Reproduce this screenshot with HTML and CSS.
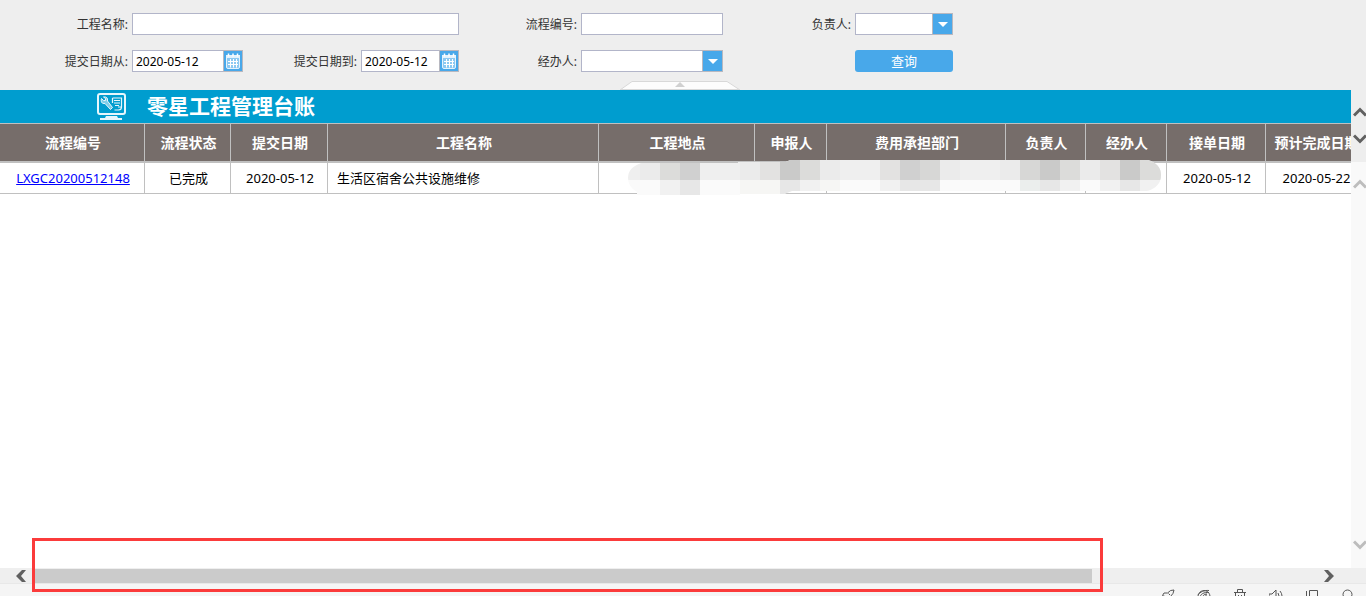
FILE: index.html
```html
<!DOCTYPE html>
<html lang="zh-CN">
<head>
<meta charset="utf-8">
<title>零星工程管理台账</title>
<link rel="stylesheet" href="styles.css">
</head>
<body>
<svg class="defs" aria-hidden="true">
  <symbol id="calendar" viewBox="0 0 18 20">
    <path d="M2.500 4.500h13v11.500q0 1.500-1.500 1.500h-10q-1.500 0-1.500-1.500z" fill="#8cc9f2" stroke="#e4f3fd" stroke-width="1"/>
    <path d="M2 4h14v3h-14z" fill="#e4f3fd"/>
    <path d="M4.500 2.500v3M9 2.500v3M13.500 2.500v3" stroke="#fff" stroke-width="1.500"/>
    <path d="M4 10.500h10M4 13.500h10M6.500 8v8.500M9.500 8v8.500M12.500 8v8.500" stroke="#fff" stroke-width="1" fill="none"/>
  </symbol>
  <symbol id="up" viewBox="0 0 14 10"><path d="M1 8.500l6-6 6 6" fill="none" stroke="currentColor" stroke-width="3"/></symbol>
  <symbol id="down" viewBox="0 0 14 10"><path d="M1 1.500l6 6 6-6" fill="none" stroke="currentColor" stroke-width="3"/></symbol>
</svg>
<form class="filters">
  <label class="label" for="name">工程名称:</label>
  <input class="box wide" id="name" type="text">
  <label class="label" for="code">流程编号:</label>
  <input class="box" id="code" type="text">
  <label class="label" for="owner">负责人:</label>
  <div class="combo">
    <select class="box" id="owner"><option></option></select>
    <span class="drop"><svg width="10" height="5" viewBox="0 0 10 5"><path d="M0 0h10l-5 5z" fill="#fff"/></svg></span>
  </div>
  <label class="label" for="from">提交日期从:</label>
  <div class="date">
    <input class="box" id="from" type="text" value="2020-05-12">
    <button class="pick" type="button" aria-label="选择日期"><svg width="18" height="20"><use href="#calendar"/></svg></button>
  </div>
  <label class="label" for="to">提交日期到:</label>
  <div class="date">
    <input class="box" id="to" type="text" value="2020-05-12">
    <button class="pick" type="button" aria-label="选择日期"><svg width="18" height="20"><use href="#calendar"/></svg></button>
  </div>
  <label class="label" for="agent">经办人:</label>
  <div class="combo">
    <select class="box" id="agent"><option></option></select>
    <span class="drop"><svg width="10" height="5" viewBox="0 0 10 5"><path d="M0 0h10l-5 5z" fill="#fff"/></svg></span>
  </div>
  <button class="query" type="button">查询</button>
  <button class="collapse" type="button" aria-label="收起">
    <svg width="120" height="9" viewBox="0 0 120 9"><path d="M0 9l12-8.500h95l13 8.500z" fill="#fcfcfc" stroke="#d8d8d8"/><path d="M0 8.500h120" stroke="#d8d8d8"/><path d="M55 6l5-5 5 5z" fill="#d0d0d0"/></svg>
  </button>
</form>
<main class="report">
  <div class="sheet">
    <header class="title">
      <svg width="32" height="29" viewBox="0 0 32 29" fill="none" stroke="#e6f6fc">
        <rect x="2" y="2" width="27" height="20" rx="2" stroke-width="2"/>
        <path d="M10 24h11l1 2h-13z" fill="#e6f6fc" stroke="none"/>
        <path d="M4 27h22" stroke-width="2"/>
        <path d="M5.500 6.500l2 2h2v-2l-2-1.500c3-.5 4.500 1 4 4l5 6.500-2 2-5.500-6c-3 .5-4.500-1.500-3.500-5z" stroke-width="1" fill="#7fcde8"/>
        <path d="M16.500 6h9v9q0 3-3 3h-4M18 8.500h6M18 11h6M19 13.500h4M16.500 6v5M26 15h-4" stroke-width="1.200"/>
      </svg>
      <h1>零星工程管理台账</h1>
    </header>
    <table class="ledger">
      <colgroup><col class="c1"><col class="c2"><col class="c3"><col class="c4"><col class="c5"><col class="c6"><col class="c7"><col class="c8"><col class="c9"><col class="c10"><col class="c11"></colgroup>
      <thead><tr><th>流程编号</th><th>流程状态</th><th>提交日期</th><th>工程名称</th><th>工程地点</th><th>申报人</th><th>费用承担部门</th><th>负责人</th><th>经办人</th><th>接单日期</th><th>预计完成日期</th></tr></thead>
      <tbody><tr><td><a href="#">LXGC20200512148</a></td><td>已完成</td><td>2020-05-12</td><td class="text">生活区宿舍公共设施维修</td><td></td><td></td><td></td><td></td><td></td><td>2020-05-12</td><td>2020-05-22</td></tr></tbody>
    </table>
    <svg class="mask" width="534" height="36" viewBox="627 160 534 36" shape-rendering="crispEdges" aria-hidden="true">
      <clipPath id="shape"><path d="M642 163h96v-1h48l4-2h358q13 4 13 15 0 12-14 16h-355l-8 3h-44v1h-103v-3q-9-5-9-14 0-11 14-15z"/></clipPath>
      <g clip-path="url(#shape)">
        <path fill="#efefef" d="M627 160h534v20h-534z"/><path fill="#fafafa" d="M627 180h534v16h-534z"/>
        <path fill="#ebebeb" d="M640 160h20v20h-20zM740 160h20v20h-20zM820 160h20v20h-20zM940 160h20v20h-20zM1000 160h20v20h-20zM1080 160h20v20h-20z"/>
        <path fill="#dcdcda" d="M660 160h20v20h-20zM800 160h20v20h-20zM1060 160h20v20h-20zM1140 160h21v20h-21z"/>
        <path fill="#d0d0d0" d="M680 160h20v20h-20zM900 160h20v20h-20z"/>
        <path fill="#e3e2e1" d="M760 160h20v20h-20zM880 160h20v20h-20zM1100 160h20v20h-20z"/>
        <path fill="#cacac9" d="M780 160h20v20h-20zM1040 160h20v20h-20zM1120 160h20v20h-20z"/>
        <path fill="#d7d7d6" d="M920 160h20v20h-20zM1020 160h20v20h-20z"/>
        <path fill="#f1f1f1" d="M660 180h20v16h-20zM800 180h20v16h-20zM880 180h20v16h-20zM1060 180h20v16h-20zM1100 180h20v16h-20zM1140 180h21v16h-21z"/>
        <path fill="#e7e7e7" d="M680 180h20v16h-20zM780 180h20v16h-20zM900 180h40v16h-40zM1040 180h20v16h-20zM1120 180h20v16h-20z"/>
        <path fill="#ebeeed" d="M1020 180h20v16h-20z"/>
        <path fill="#f6f6f4" d="M740 180h40v16h-40zM820 180h20v16h-20z"/>
      </g>
    </svg>
  </div>
  <div class="vbars">
    <div class="vbar head"><svg width="14" height="10"><use href="#up"/></svg><svg width="14" height="10"><use href="#down"/></svg></div>
    <div class="vbar body"><svg width="14" height="10"><use href="#up"/></svg><svg width="14" height="10"><use href="#down"/></svg></div>
  </div>
</main>
<div class="hbar">
  <svg width="10" height="12" viewBox="0 0 10 12"><path d="M0 6l6-6h4l-5 6 5 6h-4z" fill="#606060"/></svg>
  <div class="track"><div class="thumb"></div></div>
  <svg width="10" height="12" viewBox="0 0 10 12"><path d="M10 6l-6-6h-4l5 6-5 6h4z" fill="#606060"/></svg>
</div>
<footer class="status">
  <svg width="14" height="14" viewBox="0 0 14 14"><path d="M4 7.500l-2.500-1 1.500-2.500h3.500q3-3.500 6.500-3-.2 3.500-3.500 6.500v3l-2.500 2-1-2.500zM7.500 4.500l1.500 1.500M3.500 9l-2 3"/></svg>
  <svg width="14" height="14" viewBox="0 0 14 14"><path d="M1.500 10a6 6 0 1 1 11 0M1 6c2-3 6-5 11-4.500M3 9c0-4 4-6 9-5.500M6 10c-1-3 1-5 4-5M9 5v6M1.500 10a6 6 0 0 0 11 0"/></svg>
  <svg width="14" height="14" viewBox="0 0 14 14"><path d="M1 3.500h12M4.500 3v-2.500h5v2.500M2.500 4v9h9v-9M5.500 6v5M8.500 6v5"/></svg>
  <svg width="14" height="14" viewBox="0 0 14 14"><path d="M0 5h3l4-4v12l-4-4h-3zM9 4q2 3 0 6M11 2q4 5 0 10"/></svg>
  <svg width="14" height="14" viewBox="0 0 14 14"><path d="M4.500 1.500h8v11h-8zM1.500 2v8"/></svg>
  <svg width="14" height="14" viewBox="0 0 14 14"><circle cx="6.500" cy="5.500" r="4.500"/><path d="M10 9l3 4"/></svg>
</footer>
<div class="highlight"></div>
</body>
</html>
```

FILE: styles.css
```css
* { box-sizing: border-box; }
body {
  margin: 0;
  height: 100vh;
  display: flex;
  flex-direction: column;
  overflow: hidden;
  position: relative;
  background: #fff;
  color: #000;
  font: 13px/18px "Noto Sans", "Noto Sans CJK SC", sans-serif;
}
svg { display: block; flex: none; }
.defs { position: absolute; width: 0; height: 0; }

.filters {
  position: relative;
  flex: none;
  display: grid;
  grid-template-columns: 130px 111px 114px 98px 118px 142px 128px 98px;
  grid-auto-rows: 22px;
  gap: 15px 2px;
  padding: 13px 0 18px;
  background: #eee;
}
.label { padding-right: 2px; text-align: right; font-size: 12px; line-height: 23px; color: #333; }
.box {
  width: 100%;
  min-width: 0;
  height: 22px;
  margin: 0;
  padding: 0 3px;
  border: 1px solid #b2b5c9;
  border-radius: 0;
  background: #fff;
  color: #000;
  font: inherit;
  font-size: 12px;
  appearance: none;
}
.wide { grid-column: span 3; }
.combo { position: relative; }
.drop {
  position: absolute;
  top: 0;
  right: 0;
  width: 21px;
  height: 22px;
  display: flex;
  align-items: center;
  justify-content: center;
  border: 1px solid #b8b8c0;
  background: #48a8ea;
  pointer-events: none;
}
.date { display: flex; }
.date .box { border-right: 0; }
.pick {
  flex: none;
  width: 20px;
  height: 22px;
  padding: 0;
  border: 1px solid #b8b8c0;
  background: #48a8ea;
}
.query {
  grid-column: 8;
  padding: 0;
  border: 0;
  border-radius: 3px;
  background: #48a8ea;
  color: #fff;
  font: inherit;
}
.collapse {
  position: absolute;
  bottom: 0;
  left: calc(50% - 63px);
  padding: 0;
  border: 0;
  background: none;
}

.report { flex: 1; min-height: 0; display: flex; }
.sheet { position: relative; flex: 1; min-width: 0; overflow: hidden; }
.title {
  display: flex;
  align-items: center;
  gap: 19px;
  height: 33px;
  padding-left: 96px;
  background: #009dcf;
  color: #fff;
}
h1 { margin: 0; padding-bottom: 2px; font-size: 21px; line-height: 30px; font-weight: 700; }
.ledger {
  width: 1366px;
  table-layout: fixed;
  border-collapse: separate;
  border-spacing: 0;
}
.c1 { width: 145px; }
.c2 { width: 86px; }
.c3 { width: 97px; }
.c4 { width: 271px; }
.c5 { width: 156px; }
.c6 { width: 72px; }
.c7 { width: 179px; }
.c8 { width: 80px; }
.c9 { width: 81px; }
.c10 { width: 99px; }
.c11 { width: 100px; }
th, td { padding: 0 0 0 2px; border-right: 1px solid #c0c0c0; text-align: center; white-space: nowrap; }
th {
  height: 40px;
  border-top: 1px solid #c0c0c0;
  border-bottom: 2px solid #c0c0c0;
  background: #766d6a;
  color: #fff;
  font-size: 14px;
}
td { height: 31px; border-bottom: 1px solid #c0c0c0; }
td.text { padding-left: 9px; text-align: left; }
a { color: #00f; }
.mask { position: absolute; left: 627px; top: 70px; }

.vbars { flex: none; width: 15px; display: flex; flex-direction: column; overflow: hidden; }
.vbar { display: flex; flex-direction: column; align-items: flex-start; padding-left: 2px; }
.head { height: 72px; padding-top: 17px; gap: 17px; background: #eee; color: #606060; }
.body { flex: 1; justify-content: space-between; padding-top: 17px; padding-bottom: 18px; background: #f9f9f9; color: #bdbdbd; }

.hbar {
  flex: none;
  display: flex;
  align-items: center;
  gap: 7px;
  height: 16px;
  padding: 0 32px 0 16px;
  border-bottom: 1px solid #e8e8e8;
  background: #efefef;
}
.track { flex: 1; }
.thumb { width: 82.5%; height: 14px; background: #cbcbcb; }
.status {
  flex: none;
  display: flex;
  justify-content: flex-end;
  gap: 22px;
  height: 12px;
  padding: 5px 11px 0 0;
  overflow: hidden;
  background: #f5f5f5;
}
.status svg { fill: none; stroke: #555; stroke-width: 1; }
.highlight {
  position: absolute;
  left: 32px;
  right: 263px;
  bottom: 4px;
  height: 54px;
  border: 3px solid #fb3b3b;
  pointer-events: none;
}
```
